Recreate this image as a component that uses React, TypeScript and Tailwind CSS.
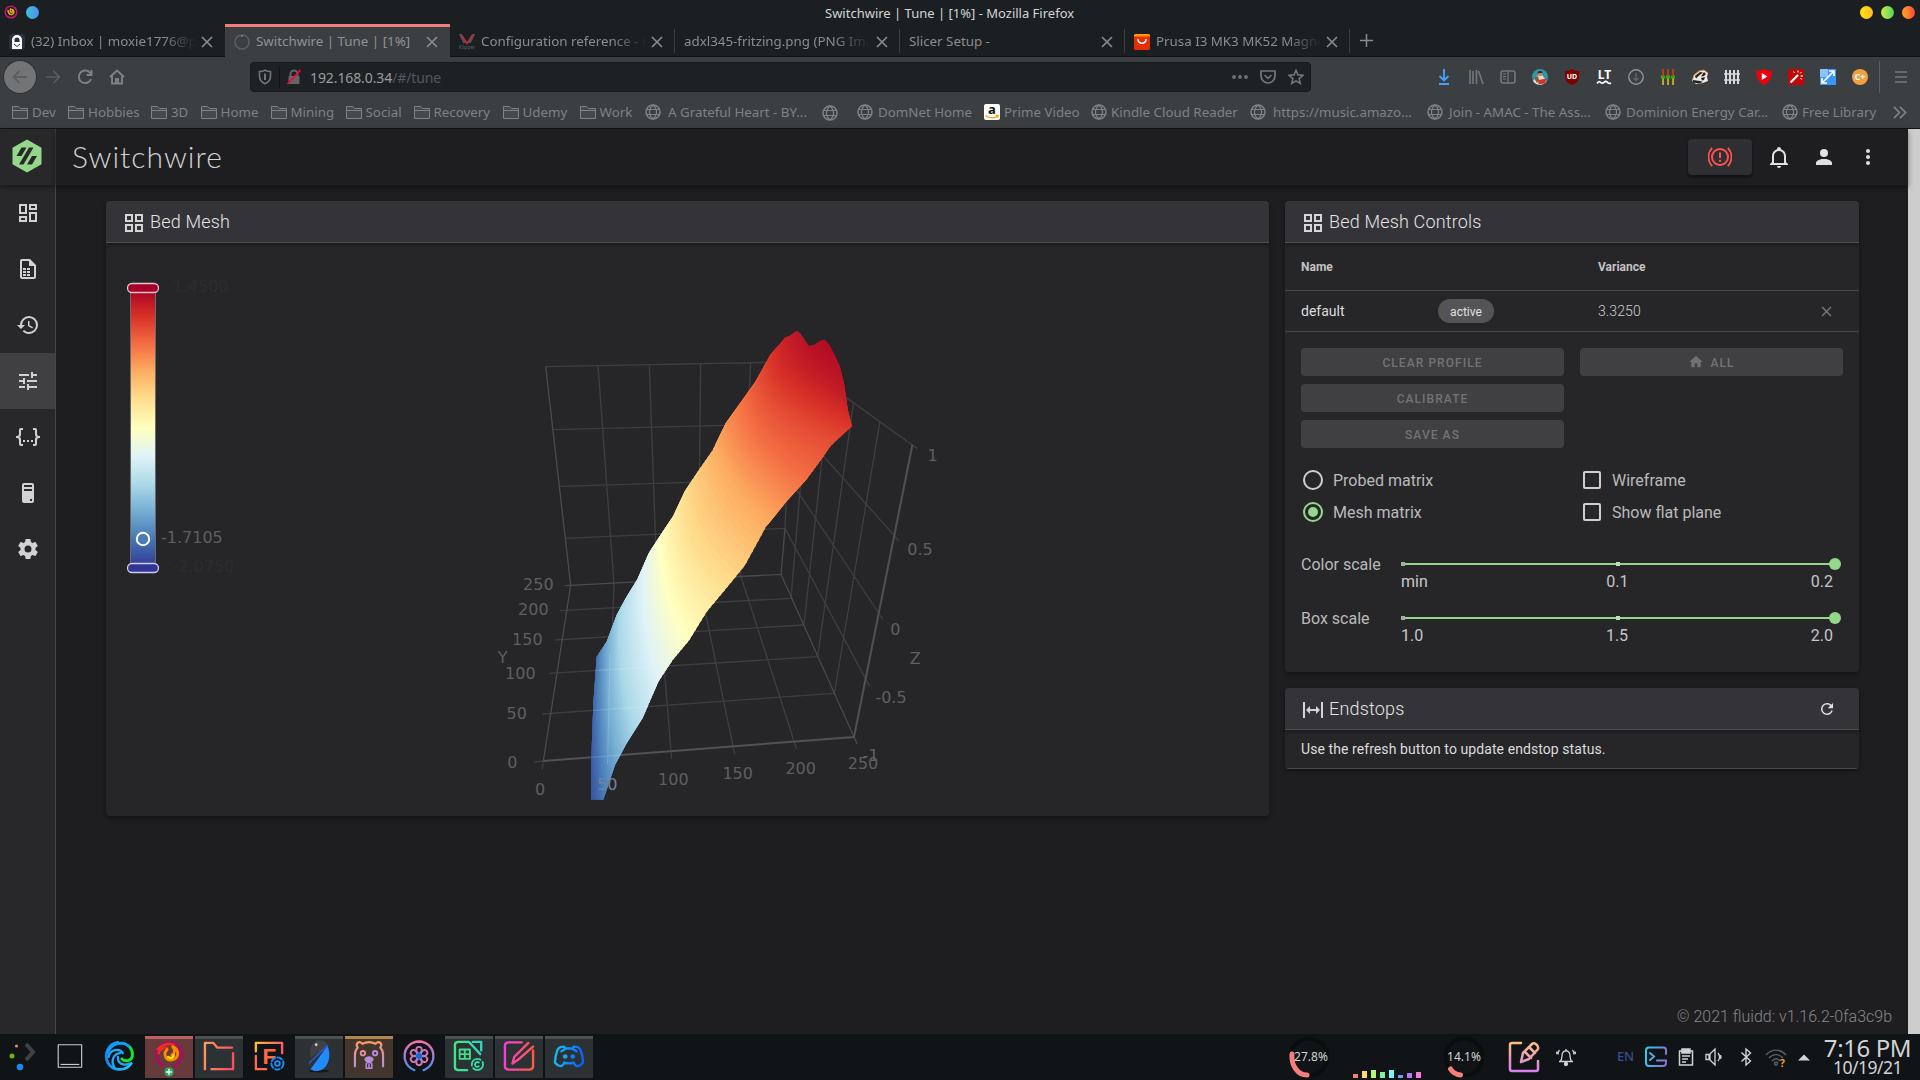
import React from "react";

const NOTO = "font-['Noto_Sans',sans-serif]";

/* ---------- Material glyphs ---------- */
const glyph = {
  dashboard:
    "M19,5V7H15V5H19M9,5V11H5V5H9M19,13V19H15V13H19M9,17V19H5V17H9M21,3H13V9H21V3M11,3H3V13H11V3M21,11H13V21H21V11M11,15H3V21H11V15Z",
  history:
    "M13.5,8H12V13L16.28,15.54L17,14.33L13.5,12.25V8M13,3A9,9 0 0,0 4,12H1L4.96,16.03L9,12H6A7,7 0 0,1 13,5A7,7 0 0,1 20,12A7,7 0 0,1 13,19C11.07,19 9.32,18.21 8.06,16.94L6.64,18.36C8.27,20 10.5,21 13,21A9,9 0 0,0 22,12A9,9 0 0,0 13,3",
  tune: "M3,17V19H9V17H3M3,5V7H13V5H3M13,21V19H21V17H13V15H11V21H13M7,9V11H3V13H7V15H9V9H7M21,13V11H11V13H21M15,9H17V7H21V5H17V3H15V9Z",
  json: "M5,3H7V5H5V10A2,2 0 0,1 3,12A2,2 0 0,1 5,14V19H7V21H5C3.93,20.73 3,20.1 3,19V15A2,2 0 0,0 1,13H0V11H1A2,2 0 0,0 3,9V5A2,2 0 0,1 5,3M19,3A2,2 0 0,1 21,5V9A2,2 0 0,0 23,11H24V13H23A2,2 0 0,0 21,15V19A2,2 0 0,1 19,21H17V19H19V14A2,2 0 0,1 21,12A2,2 0 0,1 19,10V5H17V3H19M7,15H9V17H7M11,15H13V17H11M15,15H17V17H15Z",
  tower:
    "M8,2H16A2,2 0 0,1 18,4V20A2,2 0 0,1 16,22H8A2,2 0 0,1 6,20V4A2,2 0 0,1 8,2M8,4V6H16V4H8M16,8H8V10H16V8M16,18H14V20H16V18Z",
  cog: "M12,15.5A3.5,3.5 0 0,1 8.5,12A3.5,3.5 0 0,1 12,8.5A3.5,3.5 0 0,1 15.5,12A3.5,3.5 0 0,1 12,15.5M19.43,12.97C19.47,12.65 19.5,12.33 19.5,12C19.5,11.67 19.47,11.34 19.43,11L21.54,9.37C21.73,9.22 21.78,8.95 21.66,8.73L19.66,5.27C19.54,5.05 19.27,4.96 19.05,5.05L16.56,6.05C16.04,5.66 15.5,5.32 14.87,5.07L14.5,2.42C14.46,2.18 14.25,2 14,2H10C9.75,2 9.54,2.18 9.5,2.42L9.13,5.07C8.5,5.32 7.96,5.66 7.44,6.05L4.95,5.05C4.73,4.96 4.46,5.05 4.34,5.27L2.34,8.73C2.21,8.95 2.27,9.22 2.46,9.37L4.57,11C4.53,11.34 4.5,11.67 4.5,12C4.5,12.33 4.53,12.65 4.57,12.97L2.46,14.63C2.27,14.78 2.21,15.05 2.34,15.27L4.34,18.73C4.46,18.95 4.73,19.03 4.95,18.95L7.44,17.94C7.96,18.34 8.5,18.68 9.13,18.93L9.5,21.58C9.54,21.82 9.75,22 10,22H14C14.25,22 14.46,21.82 14.5,21.58L14.87,18.93C15.5,18.67 16.04,18.34 16.56,17.94L19.05,18.95C19.27,19.03 19.54,18.95 19.66,18.73L21.66,15.27C21.78,15.05 21.73,14.78 21.54,14.63L19.43,12.97Z",
  grid: "M3 11H11V3H3M5 5H9V9H5M13 21H21V13H13M15 15H19V19H15M3 21H11V13H3M5 15H9V19H5M13 3V11H21V3M19 9H15V5H19Z",
  bell: "M10,21H14A2,2 0 0,1 12,23A2,2 0 0,1 10,21M21,19V20H3V19L5,17V11C5,7.9 7.03,5.17 10,4.29C10,4.19 10,4.1 10,4A2,2 0 0,1 12,2A2,2 0 0,1 14,4C14,4.1 14,4.19 14,4.29C16.97,5.17 19,7.9 19,11V17L21,19M17,11A5,5 0 0,0 12,6A5,5 0 0,0 7,11V18H17V11Z",
  account:
    "M12,4A4,4 0 0,1 16,8A4,4 0 0,1 12,12A4,4 0 0,1 8,8A4,4 0 0,1 12,4M12,14C16.42,14 20,15.79 20,18V20H4V18C4,15.79 7.58,14 12,14Z",
  dots: "M12,16A2,2 0 0,1 14,18A2,2 0 0,1 12,20A2,2 0 0,1 10,18A2,2 0 0,1 12,16M12,10A2,2 0 0,1 14,12A2,2 0 0,1 12,14A2,2 0 0,1 10,12A2,2 0 0,1 12,10M12,4A2,2 0 0,1 14,6A2,2 0 0,1 12,8A2,2 0 0,1 10,6A2,2 0 0,1 12,4Z",
  home: "M10,20V14H14V20H19V12H22L12,3L2,12H5V20H10Z",
  refresh:
    "M17.65,6.35C16.2,4.9 14.21,4 12,4A8,8 0 0,0 4,12A8,8 0 0,0 12,20C15.73,20 18.84,17.45 19.73,14H17.65C16.83,16.33 14.61,18 12,18A6,6 0 0,1 6,12A6,6 0 0,1 12,6C13.66,6 15.14,6.69 16.22,7.78L13,11H20V4L17.65,6.35Z",
  expand: "M9,11H15V8L19,12L15,16V13H9V16L5,12L9,8V11M2,20V4H4V20H2M20,20V4H22V20H20Z",
  file: "M6,2A2,2 0 0,0 4,4V20A2,2 0 0,0 6,22H18A2,2 0 0,0 20,20V8L14,2H6M6,4H13V9H18V20H6V4M7,11V13H10V11H7M11,11V13H14V11H11M7,14V16H10V14H7M11,14V16H14V14H11M7,17V19H10V17H7M11,17V19H14V17H11Z",
  close:
    "M19,6.41L17.59,5L12,10.59L6.41,5L5,6.41L10.59,12L5,17.59L6.41,19L12,13.41L17.59,19L19,17.59L13.41,12L19,6.41Z",
  radioOff:
    "M12,20A8,8 0 0,1 4,12A8,8 0 0,1 12,4A8,8 0 0,1 20,12A8,8 0 0,1 12,20M12,2A10,10 0 0,0 2,12A10,10 0 0,0 12,22A10,10 0 0,0 22,12A10,10 0 0,0 12,2Z",
  radioOn:
    "M12,20A8,8 0 0,1 4,12A8,8 0 0,1 12,4A8,8 0 0,1 20,12A8,8 0 0,1 12,20M12,2A10,10 0 0,0 2,12A10,10 0 0,0 12,22A10,10 0 0,0 22,12A10,10 0 0,0 12,2M12,7A5,5 0 0,0 7,12A5,5 0 0,0 12,17A5,5 0 0,0 17,12A5,5 0 0,0 12,7Z",
  checkOff:
    "M19,3H5C3.89,3 3,3.89 3,5V19A2,2 0 0,0 5,21H19A2,2 0 0,0 21,19V5C21,3.89 20.1,3 19,3M19,5V19H5V5H19Z",
};

function Mdi({ name, size = 24, className = "" }: { name: keyof typeof glyph; size?: number; className?: string }) {
  return (
    <svg width={size} height={size} viewBox="0 0 24 24" fill="currentColor" className={`shrink-0 ${className}`}>
      <path d={glyph[name]} />
    </svg>
  );
}

type Box = { size?: number; className?: string; children: React.ReactNode; vb?: string };
function Line({ size = 16, className = "", children, vb = "0 0 16 16" }: Box) {
  return (
    <svg width={size} height={size} viewBox={vb} fill="none" stroke="currentColor" strokeWidth="1.6" className={`shrink-0 ${className}`}>
      {children}
    </svg>
  );
}

/* ---------- Window title ---------- */
function TitleBar() {
  return (
    <div className="flex h-6 shrink-0 items-center bg-[#1b1f21] pl-1">
      <svg width="14" height="14" viewBox="0 0 14 14" fill="none">
        <circle cx="7" cy="7" r="5.8" stroke="#c2186a" strokeWidth="1.5" />
        <path d="M4 5c0 3 1.500 5 4 4.500s2.500-4.500 0-5c1.500 1.500 .5 3-.8 2.800S6 5 7 3.500" stroke="#f0a020" strokeWidth="1.500" />
      </svg>
      <span className="ml-2 size-[13px] rounded-full bg-linear-to-r from-[#3fc1dd] to-[#4c8ee9]" />
      <span className={`ml-[786px] mt-0.5 whitespace-nowrap text-[13px] leading-5 text-[#d3d5d6] ${NOTO}`}>
        Switchwire | Tune | [1%] - Mozilla Firefox
      </span>
      <div className="ml-auto flex gap-2 pr-[5px]">
        <span className="size-[13px] rounded-full bg-linear-to-r from-[#ffe600] to-[#ffb42b]" />
        <span className="size-[13px] rounded-full bg-linear-to-r from-[#c5ee3c] to-[#4fd35f]" />
        <span className="size-[13px] rounded-full bg-linear-to-r from-[#ffa72b] to-[#ff3f2f]" />
      </div>
    </div>
  );
}

/* ---------- Tabs ---------- */
const tabIcons: Record<string, React.ReactNode> = {
  proton: (
    <svg width="16" height="16" viewBox="0 0 16 16">
      <rect width="16" height="16" rx="3" fill="#2c2f3f" />
      <path d="M3 15V6a5 5 0 0 1 10 0v9z" fill="#fff" />
      <path d="M5.500 8V6a2.500 2.500 0 0 1 5 0v2z" fill="#2c2f3f" />
      <path d="M5 10l3 2.500 3-2.500" stroke="#2c2f3f" fill="none" />
    </svg>
  ),
  spin: (
    <svg width="16" height="16" viewBox="0 0 16 16" fill="none">
      <circle cx="8" cy="8" r="7" stroke="#5c6063" strokeWidth="1.500" />
      <path d="M8 1v2" stroke="#9a9c9e" />
    </svg>
  ),
  klipper: (
    <svg width="16" height="16" viewBox="0 0 16 16" fill="none">
      <path d="M1 0l4.500 9M15 0l-4.500 9" stroke="#4b5563" strokeWidth="2.200" />
      <path d="M2 .5l6 9 6-9" stroke="#b3303a" strokeWidth="1.800" />
      <text x="8" y="15" fontSize="5" textAnchor="middle" fill="#5a6472" fontFamily="Noto Sans">Klipper</text>
    </svg>
  ),
  ali: (
    <svg width="16" height="16" viewBox="0 0 16 16" fill="none">
      <rect width="16" height="16" rx="1.500" fill="#e62e04" />
      <path d="M0 2.500V1.500A1.500 1.500 0 0 1 1.500 0h13A1.500 1.500 0 0 1 16 1.500v1z" fill="#ff9a00" />
      <path d="M4 5.500c.5 5 7.500 5 8 0" stroke="#fff" strokeWidth="1.600" strokeLinecap="round" />
    </svg>
  ),
};

const tabs: { title: string; icon?: string; active?: boolean; fade?: boolean; sep?: boolean }[] = [
  { title: "(32) Inbox | moxie1776@pr", icon: "proton", fade: true },
  { title: "Switchwire | Tune | [1%]", icon: "spin", active: true },
  { title: "Configuration reference - K", icon: "klipper", fade: true, sep: true },
  { title: "adxl345-fritzing.png (PNG Ima", fade: true, sep: true },
  { title: "Slicer Setup -", sep: true },
  { title: "Prusa I3 MK3 MK52 Magne", icon: "ali", fade: true, sep: true },
];

function TabStrip() {
  return (
    <div className="flex h-[33px] shrink-0 bg-[#1b1f21]">
      {tabs.map((t) => (
        <div
          key={t.title}
          className={`relative flex w-[225px] shrink-0 items-center border-t-[3px] pl-[9px] pr-[11px] ${
            t.active ? "border-[#f27d7d] bg-[#3b3f42]" : "border-transparent shadow-[inset_0_-1px_0_#101315]"
          }`}
        >
          {t.icon && <span className="mr-1.5 shrink-0">{tabIcons[t.icon]}</span>}
          <span
            className={`flex-1 overflow-hidden whitespace-nowrap text-[13.33px] ${NOTO} ${
              t.active ? "text-[#8f9294]" : "text-[#8b8d8f]"
            } ${t.fade ? "mask-r-from-80% mask-r-to-100%" : ""}`}
          >
            {t.title}
          </span>
          <Line size={14} className="ml-1 text-[#8b8d8f]" vb="0 0 14 14">
            <path d="M2 2l10 10M12 2L2 12" />
          </Line>
          {t.sep && <span className="absolute right-0 top-0.5 h-6 w-px bg-[#3a3e41]" />}
        </div>
      ))}
      <div className="flex flex-1 items-center pl-[9px] text-[#8b8d8f] shadow-[inset_0_-1px_0_#101315]">
        <Line size={15}><path d="M8 1v14M1 8h14" /></Line>
      </div>
    </div>
  );
}

/* ---------- Navigation ---------- */
function Extensions() {
  return (
    <div className="flex items-center gap-4">
      <Line className="text-[#45a1ff]"><path d="M8 0v11M3.500 7L8 11.500 12.500 7M3 15h10" strokeWidth="1.800" /></Line>
      <Line className="text-[#76797b]"><path d="M2 1v14M5 2v13M8.500 1v14M10.500 2l4.500 13" /></Line>
      <Line className="text-[#76797b]"><rect x="1" y="2" width="14" height="12" rx="2" /><path d="M8 2v12M3 5h3M3 7.500h3M3 10h3" strokeWidth="1.200" /></Line>
      <svg width="16" height="16" viewBox="0 0 16 16">
        <circle cx="8" cy="8" r="8" fill="#2f98a8" />
        <path d="M1 12L5.500 6.500h5L14.500 12a8 8 0 0 1-13.500 0z" fill="#e9dcc8" />
        <circle cx="8" cy="5" r="2.300" fill="#c98c62" />
        <path d="M5.500 4.500C5 1 11 1 10.500 4z" fill="#46291c" />
        <path d="M2 9l4-2 1 4-2 3z" fill="#8a5a3c" />
        <path d="M6 11l9-1.500-2.500 5-6 .8z" fill="#d5332c" />
      </svg>
      <svg width="16" height="16" viewBox="0 0 16 16">
        <path d="M8 0c2 1.500 4.500 2 7 2v5c0 5-3 7.500-7 9-4-1.500-7-4-7-9V2c2.500 0 5-.5 7-2z" fill="#800000" />
        <text x="8" y="10" textAnchor="middle" fontSize="7" fontWeight="700" fill="#fff" fontFamily="Noto Sans">UD</text>
      </svg>
      <svg width="16" height="16" viewBox="0 0 16 16" fill="none">
        <text x="8.500" y="10" textAnchor="middle" fontSize="12" fontWeight="700" fill="#fff" fontFamily="Noto Sans">LT</text>
        <path d="M1 14.500q1.750-3 3.500-1.200t3.500 0 3.500 0 3.500 .7" stroke="#fff" strokeWidth="1.700" />
      </svg>
      <Line className="text-[#8e9092]"><circle cx="8" cy="8" r="7.200" strokeWidth="1.500" /><path d="M8 4v7M5.500 9L8 11.500 10.500 9" stroke="#5f6264" /></Line>
      <svg width="16" height="16" viewBox="0 0 16 16">
        {[3, 8, 13].map((x) => (
          <g key={x}>
            <rect x={x - 0.7} y="0" width="1.500" height="7" fill="#e3341c" />
            <rect x={x - 0.7} y="9" width="1.500" height="7" fill="#e8c91c" />
            <rect x={x - 2.2} y="6.500" width="4.200" height="3" fill="#39a808" />
          </g>
        ))}
      </svg>
      <svg width="16" height="16" viewBox="0 0 16 16">
        <path d="M0 12L2 6l5-4 5-1 4 3-1 4 1 4-5 2-7 1z" fill="#efe9e2" />
        <path d="M3 7l5-4 3 .5-4 3-3 3zM12 3l2 2-2 2-3 .5zM9 9l4-1-1 3-2 .5zM1 11l7 1 3 1-4 1.500-6-1z" fill="#222" />
        <path d="M0 12L2 6l5-4 5-1 4 3" stroke="#c98545" fill="none" />
      </svg>
      <svg width="16" height="16" viewBox="0 0 16 16" stroke="#d9dadb" fill="none">
        <path d="M2 1v14M6 1v14M10 1v14M14 1v14" strokeWidth="2" />
        <path d="M0 5h16M0 11h16" strokeWidth="1.300" />
      </svg>
      <svg width="16" height="16" viewBox="0 0 16 16">
        <path d="M8 0c2 1.200 5 1.500 8 2 0 6-2 11-8 14C2 13 0 8 0 2c3-.5 6-.8 8-2z" fill="#f00009" />
        <path d="M5.800 4v7l5.500-3.500z" fill="#fff" />
      </svg>
      <svg width="16" height="16" viewBox="0 0 16 16" fill="none">
        <rect width="16" height="16" fill="#c00808" />
        <path d="M2.500 13.500L10 6" stroke="#fff" strokeWidth="2.200" />
        <path d="M10 1.500v2M13.500 3L12 4.500M15 7h-2.500M5.500 2.500l1 1.500M12.500 9l1 1.500" stroke="#fff" />
      </svg>
      <svg width="16" height="16" viewBox="0 0 16 16" fill="none">
        <rect width="16" height="16" fill="#3b97fb" />
        <path d="M0 0h8v8H0z" fill="#8cc2ff" />
        <path d="M3 13L13 3M9 2h5v5M2 9v5h5" stroke="#fff" strokeWidth="1.700" />
      </svg>
      <svg width="16" height="16" viewBox="0 0 16 16">
        <circle cx="8" cy="8" r="8" fill="#f0a040" />
        <text x="8" y="11.300" textAnchor="middle" fontSize="9" fontWeight="700" fill="#fff" fontFamily="Noto Sans">C+</text>
      </svg>
    </div>
  );
}

function NavBar() {
  return (
    <div className="flex h-10 shrink-0 items-center bg-[#3b3f42] pl-1 pr-3">
      <span className="flex size-8 items-center justify-center rounded-full bg-[#727476] shadow-[0_0_0_1px_#2e3133]">
        <Line className="text-[#5b5e60]"><path d="M15 8H1.500M7.500 2L1.500 8l6 6" strokeWidth="1.800" /></Line>
      </span>
      <Line className="ml-[9px] text-[#5b5e60]"><path d="M1 8h13.500M8.500 2l6 6-6 6" /></Line>
      <Line className="ml-4 text-[#808385]"><path d="M13.500 4.500A6.300 6.300 0 1 0 14 10M14.500 1v5h-5" strokeWidth="1.900" /></Line>
      <Line className="ml-4 text-[#808385]"><path d="M1 8l7-6.500L15 8M3 7v7.500h10V7M7 14v-4h2v4" strokeWidth="1.900" /></Line>
      <div className="ml-[125px] flex h-[30px] w-[1061px] items-center rounded-[4px] border border-[#171a1c] bg-[#1d2123] pl-[6px] pr-[6px]">
        <Line className="text-[#737577]"><path d="M8 1.200c1.800 1 3.500 1.300 5.500 1.300v4.500c0 4-2 6.300-5.500 7.800C4.500 13.300 2.500 11 2.500 7V2.500c2 0 3.700-.3 5.500-1.300z" /><path d="M8 4.500v6.500" strokeWidth="2" /></Line>
        <span className="ml-1.5 h-[22px] w-px bg-[#121416]" />
        <svg width="16" height="16" viewBox="0 0 16 16" fill="none" className="ml-1.5">
          <path d="M4.500 8V5a3.500 3.500 0 0 1 7 0v3" stroke="#636567" strokeWidth="2" />
          <rect x="2.500" y="7" width="11" height="8" rx="1" fill="#636567" />
          <path d="M1.500 15L14.500 1" stroke="#ff0039" strokeWidth="1.800" />
        </svg>
        <span className={`ml-2 text-[14px] tracking-[-0.1px] text-[#9b9d9e] ${NOTO}`}>
          192.168.0.34<span className="text-[#54585a]">/#/tune</span>
        </span>
        <svg width="18" height="16" viewBox="0 0 18 16" fill="#6b6e70" className="ml-auto">
          <circle cx="3" cy="8" r="2" /><circle cx="9" cy="8" r="2" /><circle cx="15" cy="8" r="2" />
        </svg>
        <Line className="ml-[11px] text-[#737577]"><path d="M1 2h14v5a7 7 0 0 1-14 0zM4.500 6L8 9.300 11.500 6" strokeWidth="1.700" /></Line>
        <Line className="ml-3 text-[#737577]"><path d="M8 1.300l2 4.600 4.900.4-3.700 3.300 1.100 4.900L8 11.900l-4.300 2.600 1.100-4.900L1.100 6.300 6 5.900z" /></Line>
      </div>
      <div className="ml-auto flex items-center">
        <Extensions />
        <span className="ml-[11px] h-8 w-px bg-[#5a5d5f]" />
        <Line size={14} className="ml-3.5 text-[#76797b]" vb="0 0 14 14"><path d="M1 2h12M1 7h12M1 12h12" /></Line>
      </div>
    </div>
  );
}

/* ---------- Bookmarks ---------- */
const Folder = () => (
  <svg width="16" height="16" viewBox="0 0 16 16" fill="none" className="shrink-0">
    <path d="M.5 14.500V2.500h6l2 2h7v10zM.5 6.500h15" stroke="#808385" fill="#474a4c" />
  </svg>
);
const Globe = () => (
  <Line className="text-[#808385]">
    <circle cx="8" cy="8" r="7" strokeWidth="1.500" />
    <path d="M8 1c-4.700 4-4.700 10 0 14M8 1c4.700 4 4.700 10 0 14M1.500 5.500h13M1.500 10.500h13" strokeWidth="1.200" />
  </Line>
);
const Amazon = () => (
  <svg width="16" height="16" viewBox="0 0 16 16" fill="none" className="shrink-0">
    <rect width="16" height="16" rx="2" fill="#fff" />
    <text x="8" y="10" textAnchor="middle" fontSize="13" fontWeight="700" fill="#111" fontFamily="Noto Sans">a</text>
    <path d="M1.500 11.500c4 3.200 9 3 12 .5M12 11.500h2v2" stroke="#f90" strokeWidth="1.300" />
  </svg>
);
const bookmarks: [string, "f" | "g" | "a", string, string][] = [
  ["Dev", "f", "w-[56px]", "gap-1"],
  ["Hobbies", "f", "w-[83px]", "gap-1"],
  ["3D", "f", "w-[49.5px]", "gap-1"],
  ["Home", "f", "w-[70px]", "gap-1"],
  ["Mining", "f", "w-[75px]", "gap-1"],
  ["Social", "f", "w-[68px]", "gap-1"],
  ["Recovery", "f", "w-[89px]", "gap-1"],
  ["Udemy", "f", "w-[77px]", "gap-1"],
  ["Work", "f", "w-[65.5px]", "gap-1"],
  ["A Grateful Heart - BY...", "g", "w-[177px]", "gap-[7px]"],
  ["", "g", "w-[35px]", "gap-1"],
  ["DomNet Home", "g", "w-[127px]", "gap-[5px]"],
  ["Prime Video", "a", "w-[107px]", "gap-1"],
  ["Kindle Cloud Reader", "g", "w-[159px]", "gap-1"],
  ["https://music.amazo...", "g", "w-[177px]", "gap-[7px]"],
  ["Join - AMAC - The Ass...", "g", "w-[178px]", "gap-[6px]"],
  ["Dominion Energy Car...", "g", "w-[177px]", "gap-[5px]"],
  ["Free Library", "g", "w-[105px]", "gap-1"],
];
function Bookmarks() {
  return (
    <div className={`flex h-8 shrink-0 items-center border-b border-[#101315] bg-[#3b3f42] pl-3 text-[13.33px] text-[#7f8284] ${NOTO}`}>
      {bookmarks.map(([t, k, w, g], i) => (
        <div key={i} className={`flex shrink-0 items-center whitespace-nowrap ${w} ${g}`}>
          {k === "f" ? <Folder /> : k === "g" ? <Globe /> : <Amazon />}
          <span>{t}</span>
        </div>
      ))}
      <Line size={15} className="ml-[5px] text-[#808385]"><path d="M2 2l6 6-6 6M8.500 2l6 6-6 6" strokeWidth="1.800" /></Line>
    </div>
  );
}

/* ---------- Side navigation ---------- */
const sideItems: (keyof typeof glyph)[] = ["dashboard", "file", "history", "tune", "json", "tower", "cog"];
function SideNav() {
  return (
    <nav className="flex w-14 shrink-0 flex-col border-r border-[#474749] bg-[#28282b]">
      <div className="flex h-14 items-center justify-center pr-px shadow-[0_2px_5px_rgba(0,0,0,0.4)]">
        <svg width="30" height="34" viewBox="0 0 30 34" className="-mt-0.5">
          <path d="M15 .5L29.500 8.700v16.600L15 33.500.5 25.300V8.700z" fill="#94d68a" />
          <path d="M9.500 8.500h5L9.500 17h-5zM17 8.500h4.500L11.500 25.500H7zM20 17h5l-5 8.500h-5z" fill="#28282b" />
        </svg>
      </div>
      {sideItems.map((n) => (
        <div key={n} className={`flex h-14 items-center justify-center ${n === "tune" ? "bg-[#404042]" : ""}`}>
          <Mdi name={n} className="text-[#d2d2d3]" />
        </div>
      ))}
    </nav>
  );
}

function AppBar() {
  return (
    <header className="z-10 flex h-14 shrink-0 items-center bg-[#1e1e20] pl-4 pr-7 shadow-[0_2px_5px_rgba(0,0,0,0.45)]">
      <h1 className="-mt-0.5 font-[Lato] text-[30px] font-light tracking-[1px] text-[#d2d2d3]">Switchwire</h1>
      <div className="ml-auto flex items-center">
        <span className="flex h-9 w-16 items-center justify-center rounded bg-[#2f2f33] shadow-[0_2px_3px_rgba(0,0,0,0.5)]">
          <svg width="24" height="24" viewBox="0 0 24 24" fill="none" stroke="#ff5252" strokeWidth="2">
            <circle cx="12" cy="12" r="8" />
            <path d="M12 7.500v5.500M12 14.800v2" />
            <path d="M4.200 3C-.7 8 -.7 16 4.200 21M19.800 3c4.900 5 4.900 13 0 18" strokeWidth="1.800" />
          </svg>
        </span>
        <Mdi name="bell" className="ml-[15px] text-[#e1e1e1]" />
        <Mdi name="account" className="ml-[21px] text-[#e1e1e1]" />
        <Mdi name="dots" className="ml-5 text-[#e1e1e1]" />
      </div>
    </header>
  );
}

/* ---------- Bed mesh plot ---------- */
const ramp = [
  [49, 54, 149], [69, 117, 180], [116, 173, 209], [171, 217, 233], [224, 243, 248], [255, 255, 191],
  [254, 224, 144], [253, 174, 97], [244, 109, 67], [215, 48, 39], [165, 0, 38],
];
function rampColor(v: number) {
  const t = Math.min(0.9999, Math.max(0, v)) * 10;
  const i = Math.floor(t);
  const f = t - i;
  return `rgb(${ramp[i].map((c, k) => Math.round(c + (ramp[i + 1][k] - c) * f)).join(",")})`;
}

/* value, then left / middle / right points of each level line */
const levels: [number, number, number, number, number, number, number][] = [
  [0.03, 325, 1000, 325, 1250, 325, 1480],
  [0.1, 356, 1010, 352, 1250, 372, 1475],
  [0.2, 386, 975, 388, 1180, 415, 1350],
  [0.3, 425, 890, 430, 1080, 470, 1265],
  [0.4, 497, 745, 497, 920, 537, 1115],
  [0.5, 543, 672, 568, 840, 630, 990],
  [0.6, 612, 545, 645, 710, 745, 832],
  [0.7, 708, 400, 765, 530, 868, 645],
  [0.75, 745, 325, 795, 440, 925, 575],
  [0.8, 800, 250, 840, 370, 985, 505],
  [0.86, 850, 175, 905, 280, 1085, 385],
  [0.9, 885, 115, 935, 220, 1115, 325],
  [0.935, 925, 70, 965, 160, 1105, 270],
  [0.96, 965, 50, 1010, 130, 1095, 190],
  [0.98, 1000, 30, 1040, 60, 1080, 90],
];

function strips() {
  const out: { d: string; c: string }[] = [];
  const ext = (p: number[]) => {
    const [lx, ly, mx, my, rx, ry] = p;
    const ax = lx + (lx - mx) * 0.5;
    const ay = ly + (ly - my) * 0.5;
    const bx = rx + (rx - mx) * 0.5;
    const by = ry + (ry - my) * 0.5;
    const cx = 2 * mx - (lx + rx) / 2;
    const cy = 2 * my - (ly + ry) / 2;
    const pts: string[] = [`${ax},${ay}`];
    for (let k = 0; k <= 8; k++) {
      const t = k / 8;
      const x = (1 - t) ** 2 * lx + 2 * t * (1 - t) * cx + t * t * rx;
      const y = (1 - t) ** 2 * ly + 2 * t * (1 - t) * cy + t * t * ry;
      pts.push(`${x.toFixed(1)},${y.toFixed(1)}`);
    }
    pts.push(`${bx},${by}`);
    return pts;
  };
  for (let i = 0; i < levels.length - 1; i++) {
    const n = 12;
    for (let k = 0; k < n; k++) {
      const at = (f: number) => levels[i].map((a, j) => a + (levels[i + 1][j] - a) * f);
      const a = at(k / n);
      const b = at((k + 1) / n);
      const pa = ext(a.slice(1));
      const pb = ext(b.slice(1)).reverse();
      out.push({ d: `M${pa.join("L")}L${pb.join("L")}Z`, c: rampColor((a[0] + b[0]) / 2) });
    }
  }
  return out;
}

const outline =
  "333,1469 334,1340 340,1180 350,1040 380,995 410,915 437,865 472,808 507,728 545,670 580,617 615,542 655,482 697,422 738,338 780,280 825,217 872,133 917,82 930,78 945,66 953,64 962,72 975,92 987,108 1003,105 1020,93 1035,90 1048,105 1065,138 1079,168 1092,220 1098,260 1103,298 1116,349 1080,381 1050,410 1030,440 980,508 920,574 857,652 795,766 755,815 680,905 628,990 578,1050 535,1115 488,1224 440,1300 405,1365 370,1469";

const wall =
  "M197,170L925,156M220,359L930,341M239,529L925,508M257,685L915,655M354,167L402,822M508,165L531,813M662,160L655,806M812,158L782,797M935,155L915,655" +
  "M928,140L1312,416M930,325L1256,692M925,503L1208,927M915,655L1169,1129M1200,333L1063,1150M1121,275L1013,1040M1050,225L972,945M990,190L933,865" +
  "M240,902L933,865M226,990L972,945M208,1090L1013,1040M186,1212L1063,1150M402,822L383,1362M531,813L575,1347M655,806L764,1332M782,797L950,1318M162,1356L190,1353L187,1378";
const edges = "M197,170L272,826M915,655L903,793M255,827L903,793L1122,1281L1132,1302M272,826L190,1353";

const plotLabels: [string, number, number][] = [
  ["250", 175, 824], ["200", 160, 899], ["150", 142, 987], ["100", 121, 1089], ["50", 110, 1210], ["0", 97, 1356], ["Y", 68, 1042],
  ["0", 180, 1438], ["50", 382, 1422], ["100", 580, 1407], ["150", 773, 1391], ["200", 962, 1376], ["250", 1149, 1360], ["-1", 1172, 1337],
  ["1", 1358, 436], ["0.5", 1320, 718], ["0", 1246, 957], ["-0.5", 1233, 1161], ["Z", 1306, 1045],
];

function MeshPlot() {
  return (
    <svg width="1163" height="572" viewBox="106 243 1163 572" fontFamily="DejaVu Sans, sans-serif" fontSize="16">
      <defs>
        <linearGradient id="scale" x1="0" y1="288" x2="0" y2="568" gradientUnits="userSpaceOnUse">
          {ramp.map((_, i) => (
            <stop key={i} offset={i / 10} stopColor={rampColor(1 - i / 10)} />
          ))}
        </linearGradient>
        <clipPath id="sheet"><polygon points={outline} /></clipPath>
      </defs>
      <rect x="130.500" y="288" width="25" height="280" fill="url(#scale)" stroke="#6a6a6c" />
      <rect x="127.500" y="283.500" width="31" height="9" rx="4.500" fill="#a50026" stroke="#e6c4cc" strokeWidth="1.300" />
      <rect x="127.500" y="563.500" width="31" height="9" rx="4.500" fill="#313695" stroke="#ccd0ec" strokeWidth="1.300" />
      <circle cx="143" cy="539" r="6.200" fill="#4a7db8" stroke="#fff" strokeWidth="2" />
      <text x="161" y="543" fill="#5f5f61">-1.7105</text>
      <text x="172.500" y="292" fill="#2c2c2e">1.4500</text>
      <text x="172.500" y="572" fill="#2c2c2e">-2.0750</text>

      <g transform="translate(480 310) scale(0.33333)" fill="none">
        <path d={wall} stroke="#3e3e40" strokeWidth="4" />
        <path d={edges} stroke="#4a4a4c" strokeWidth="4" />
        <path d="M1297,405L1122,1281L190,1353" stroke="#515153" strokeWidth="6" />
        <g clipPath="url(#sheet)">
          {strips().map((s, i) => (
            <path key={i} d={s.d} fill={s.c} stroke={s.c} strokeWidth="7" strokeLinejoin="round" />
          ))}
          <path d="M208,1090L500,1072M186,1212L500,1190M390,1030L383,1362M190,1353L450,1333" stroke="#fff" strokeOpacity="0.14" strokeWidth="4" />
        </g>
      </g>
      {plotLabels.map(([t, x, y], i) => (
        <text key={i} x={480 + x / 3} y={310 + y / 3 + 5.7} textAnchor="middle" fill={t === "50" && y > 1300 ? "#7382a0" : "#5f5f61"}>
          {t}
        </text>
      ))}
    </svg>
  );
}

/* ---------- Cards ---------- */
function Card({ icon, title, action, className = "", children }: { icon: keyof typeof glyph; title: string; action?: React.ReactNode; className?: string; children: React.ReactNode }) {
  return (
    <section className={`flex flex-col overflow-hidden rounded bg-[#262628] ${className}`}>
      <div className="z-10 flex h-[42px] shrink-0 items-center border-b border-[#505053] bg-[#343338] pl-4 pr-[23px] shadow-[0_2px_4px_rgba(0,0,0,0.35)]">
        <Mdi name={icon} className="mt-0.5 text-[#d5d5d6]" />
        <span className="ml-1 text-[18px] font-light tracking-[0.17px] text-[#e4e4e5]">{title}</span>
        {action && <span className="ml-auto">{action}</span>}
      </div>
      {children}
    </section>
  );
}

function Btn({ children }: { children: React.ReactNode }) {
  return (
    <button className="flex h-7 w-full items-center justify-center gap-1.5 rounded bg-[#404042] pt-px text-[12px] font-medium tracking-[1.07px] text-[#737375]">
      {children}
    </button>
  );
}

function Choice({ icon, label, on }: { icon: keyof typeof glyph; label: string; on?: boolean }) {
  return (
    <div className="flex h-8 items-center gap-2">
      <Mdi name={icon} className={on ? "text-[#94d68a]" : "text-[#cfcfd0]"} />
      <span className="pt-0.5 text-[16px] text-[#bababb]">{label}</span>
    </div>
  );
}

function Slider({ label, ticks }: { label: string; ticks: string[] }) {
  return (
    <div className="flex h-[54px] text-[16px] text-[#bababb]">
      <span className="w-[100px] pt-px leading-6">{label}</span>
      <div className="w-[434px]">
        <div className="relative mt-[11px] flex h-0.5 items-center justify-between bg-[#94d68a]">
          <span className="size-1 bg-[#a9a9aa]" />
          <span className="size-1 bg-[#bfe0ba]" />
          <span className="size-1" />
          <span className="absolute -right-1.5 size-3 rounded-full bg-[#94d68a]" />
        </div>
        <div className="mt-[5px] flex justify-between pr-[2px] text-[#c6c6c7]">
          {ticks.map((t) => (
            <span key={t} className={`leading-6 ${t === "0.1" ? "-ml-1" : ""}`}>{t}</span>
          ))}
        </div>
      </div>
    </div>
  );
}

function Controls() {
  return (
    <Card icon="grid" title="Bed Mesh Controls" className="h-[471px] shadow-[0_2px_4px_rgba(0,0,0,0.4)]">
      <div className="grid h-12 shrink-0 grid-cols-[297px_1fr] items-center border-b border-[#474749] pl-4 text-[12px] font-bold text-[#c3c3c4]">
        <span>Name</span>
        <span>Variance</span>
      </div>
      <div className="flex h-[41px] shrink-0 items-center border-b border-[#474749] pl-4 pr-6 text-[14px]">
        <span className="w-[137px] text-[#dcdcdd]">default</span>
        <span className="flex h-6 w-14 items-center justify-center rounded-full bg-[#545456] pt-px text-[12px] text-[#e0e0e1]">active</span>
        <span className="ml-[104px] font-light tracking-[0.1px] text-[#d0d0d1]">3.3250</span>
        <Mdi name="close" size={17} className="ml-auto text-[#78787a]" />
      </div>
      <div className="grid grid-cols-2 gap-4 px-4 pt-4">
        <div className="flex flex-col gap-2">
          <Btn>CLEAR PROFILE</Btn>
          <Btn>CALIBRATE</Btn>
          <Btn>SAVE AS</Btn>
        </div>
        <div>
          <Btn><Mdi name="home" size={16} className="-mt-px" />ALL</Btn>
        </div>
      </div>
      <div className="mt-4 grid grid-cols-2 gap-x-4 px-4">
        <Choice icon="radioOff" label="Probed matrix" />
        <Choice icon="checkOff" label="Wireframe" />
        <Choice icon="radioOn" label="Mesh matrix" on />
        <Choice icon="checkOff" label="Show flat plane" />
      </div>
      <div className="mt-6 pl-4">
        <Slider label="Color scale" ticks={["min", "0.1", "0.2"]} />
        <Slider label="Box scale" ticks={["1.0", "1.5", "2.0"]} />
      </div>
    </Card>
  );
}

/* ---------- Desktop panel ---------- */
function Gradients() {
  const g: [string, string[], boolean?][] = [
    ["gEdge", ["#0a7cff", "#27c4ff"]],
    ["gWarm", ["#ff9a62", "#ff4f5e"]],
    ["gFus", ["#ffc233", "#ff5470"]],
    ["gBear", ["#ff9a62", "#a88df0"], true],
    ["gAtom", ["#f76fae", "#4b8df0"], true],
    ["gCalc", ["#3fe87e", "#2fd6c0"]],
    ["gPen", ["#f838e8", "#ff5a4a"]],
    ["gDis", ["#19c6ee", "#0a63ff"]],
    ["gNote", ["#ffc27a", "#d57cf0"], true],
    ["gTerm", ["#22d8f0", "#b04cd0"]],
  ];
  return (
    <svg width="0" height="0" className="absolute">
      <defs>
        {g.map(([id, c, v]) => (
          <linearGradient key={id} id={id} gradientUnits="userSpaceOnUse" x1="0" y1="0" x2={v ? 0 : 32} y2={v ? 32 : 6}>
            <stop offset="0" stopColor={c[0]} />
            <stop offset="1" stopColor={c[1]} />
          </linearGradient>
        ))}
      </defs>
    </svg>
  );
}

function Task({ tone = "none", children }: { tone?: "none" | "gray" | "red" | "gold"; children: React.ReactNode }) {
  const c = {
    none: "border-transparent",
    gray: "border-[#4b5053] bg-[#2c3133]",
    red: "border-[#ba6262] bg-[#673a3c]",
    gold: "border-[#b08550] bg-[#41352c]",
  }[tone];
  return (
    <div className={`flex h-[42px] w-12 shrink-0 items-center justify-center border-t-[3px] pb-[5px] ${c}`}>
      <svg width="30" height="30" viewBox="0 0 32 32" fill="none" strokeWidth="2.500" strokeLinecap="round" strokeLinejoin="round" overflow="visible">
        {children}
      </svg>
    </div>
  );
}

function Tasks() {
  return (
    <div className="flex items-center gap-0.5 pl-[45px]">
      <Task>
        <g strokeLinecap="butt"><rect x="4.500" y="4" width="25" height="24" stroke="#c9ccce" strokeWidth="1.200" /><path d="M7 25h20" stroke="#c9ccce" strokeWidth="1.200" /></g>
      </Task>
      <Task>
        <path d="M29 24C23 33 9 32 4 23 0 14 4 3 15 1.500" stroke="url(#gEdge)" strokeWidth="3" />
        <path d="M4 12C8 2 21-1 28 7" stroke="#149cf5" strokeWidth="3" />
        <path d="M28 7c4 6 3 13-3 14-3 .3-5-.5-6-2" stroke="#0be83a" strokeWidth="3" />
        <path d="M5 17c1-8 12-10 15-4M11 28c-4-7-1-14 6-15M15 17c-1 7 6 10 12 7" stroke="#1fa8fa" strokeWidth="2.500" />
      </Task>
      <Task tone="red">
        <path d="M9 26C-1 19 1 3 16 1.500 31 2 34 19 22 27" stroke="#c0006e" strokeWidth="2.500" />
        <path d="M4 9c6-6 11-7 17-5M5 13c1-4 4-6 9-6" stroke="#f0301e" strokeWidth="2.500" />
        <path d="M14 9c-5 5-1 13 6 11s7-11 0-14c3 4 2 8-1 9" stroke="#ff8a00" strokeWidth="3" />
        <path d="M15 17c2 2 6 1 6-2" stroke="#ffe100" strokeWidth="2.500" />
        <circle cx="16" cy="33" r="5" fill="#2aa866" />
        <path d="M16 30.500v5M13.500 33h5" stroke="#fff" strokeWidth="1.600" />
      </Task>
      <Task tone="gray">
        <path d="M1 30V2h9l4 5h16M31 13v17H8" stroke="url(#gWarm)" />
      </Task>
      <Task>
        <path d="M2 11V2h28v11" stroke="url(#gFus)" />
        <path d="M2 16v14h11" stroke="#ff6a50" />
        <text x="9" y="25" fontSize="24" fontWeight="700" fill="#ff6a3c" stroke="none" fontFamily="Liberation Sans">F</text>
        <circle cx="25" cy="24" r="6.500" stroke="#1590ff" strokeWidth="2" strokeDasharray="5 2.500" />
        <circle cx="25" cy="24" r="2.500" stroke="#1590ff" strokeWidth="2" />
      </Task>
      <Task tone="gray">
        <ellipse cx="16" cy="32" rx="11" ry="1.500" fill="#15181a" />
        <path d="M7 18C4 7 10-1 17-1c5 0 8 3 8 7z" fill="#3e4143" />
        <path d="M25 5c4 9 2 20-5 25-5 3-10 2-13 0z" fill="#1e8cff" />
        <path d="M25 5L6 23" stroke="#2f52c8" strokeWidth="2" />
        <circle cx="13" cy="4" r="1.500" fill="#c9cbcc" />
      </Task>
      <Task tone="gold">
        <path d="M1 27V15c0-4 1-6 3-8C1 3 5-1 9 3c4-2 10-2 14 0 4-4 8 0 5 4 2 2 3 4 3 8v12" stroke="url(#gBear)" strokeWidth="2.300" />
        <circle cx="9.500" cy="13" r="2.300" stroke="#e58f98" strokeWidth="2" />
        <circle cx="22.500" cy="13" r="2.300" stroke="#b98be0" strokeWidth="2" />
        <path d="M11 20c0-5 10-5 10 0l-3 4h-4z" fill="#b78ce0" />
        <path d="M13 24v5h6v-5M16 25v4" stroke="#b78ce0" strokeWidth="1.600" />
      </Task>
      <Task>
        <path d="M11 31C-5 25-2 1 16 .5 34 1 37 25 21 31" stroke="url(#gAtom)" />
        {[0, 60, 120, 180, 240, 300].map((a) => (
          <ellipse key={a} cx="16" cy="9.800" rx="3" ry="3.600" stroke="url(#gAtom)" strokeWidth="2" transform={`rotate(${a} 16 16)`} />
        ))}
        <circle cx="16" cy="16" r="3.200" fill="#0a6ce0" />
      </Task>
      <Task tone="gray">
        <path d="M14 31H5c-2 0-4-1-4-3V4c0-2 2-3 4-3h11l12 13" stroke="url(#gCalc)" />
        <path d="M20 1h9v9" stroke="#2fd9b0" />
        <path d="M6 9h11v10H6zM11.500 9v10M6 14h11" stroke="#3fe08c" strokeWidth="2" />
        <circle cx="25" cy="25" r="6" stroke="#35dba0" strokeWidth="2" strokeDasharray="14 3" />
        <path d="M26.500 23a2.500 2.500 0 1 0 0 4" stroke="#35dba0" strokeWidth="2" />
      </Task>
      <Task tone="gray">
        <path d="M19 1.500H5C2 1.500 1 2.500 1 5v22c0 2.500 1 3.500 4 3.500h22c3 0 4-1 4-3.500V10" stroke="url(#gPen)" />
        <path d="M26 2L11 17l-2 7 6-4L31 6" stroke="url(#gPen)" />
      </Task>
      <Task tone="gray">
        <path d="M11 6C7 6 5 7 4 9 2 14 1 19 1 23c3 4 7 5 9 2l1-2c3 1 7 1 10 0l1 2c2 3 6 2 9-2 0-4-1-9-3-14-1-2-3-3-7-3l-1 2h-8zM8 11l4-2.500M24 11l-4-2.500" stroke="url(#gDis)" />
        <circle cx="12" cy="16.500" r="2.500" fill="#14a8f5" />
        <circle cx="20" cy="16.500" r="2.500" fill="#0d80fa" />
      </Task>
    </div>
  );
}

function Gauge({ value, arc, shift = "" }: { value: string; arc: string; shift?: string }) {
  return (
    <div className="relative flex h-[46px] w-10 shrink-0 items-center justify-center">
      <svg width="40" height="46" viewBox="0 0 40 46" fill="none" className="absolute inset-0">
        <circle cx="20" cy="23" r="18.500" stroke="#0b0e0f" strokeWidth="4" />
        <path d={arc} stroke="#f87d7d" strokeWidth="5" strokeLinecap="round" />
      </svg>
      <span className={`relative text-[12px] text-[#d0d3d5] ${NOTO} ${shift}`}>{value}</span>
    </div>
  );
}

const bars: [string, string][] = [
  ["h-1", "bg-[#f87d7d]"], ["h-[7px]", "bg-[#ffd97a]"], ["h-2", "bg-[#b5f57a]"], ["h-1.5", "bg-[#7af59c]"],
  ["h-2", "bg-[#7af3fb]"], ["h-[3px]", "bg-[#7a98f8]"], ["h-[5px]", "bg-[#b57af8]"], ["h-1.5", "bg-[#fb7ad8]"],
];

function Tray() {
  return (
    <div className="ml-auto flex items-center pr-[7px] text-[#d0d3d5]">
      <Gauge value="27.8%" arc="M3 20C2 32 9 41 18 41" shift="pl-1" />
      <div className="ml-6 flex h-[46px] w-[68px] items-end justify-between pb-[2px]">
        {bars.map(([h, c], i) => (
          <span key={i} className={`w-[5px] ${h} ${c}`} />
        ))}
      </div>
      <div className="ml-[23px]"><Gauge value="14.1%" arc="M6.500 35C9 39 12 40.500 16.500 41" /></div>
      <svg width="32" height="32" viewBox="0 0 32 32" fill="none" stroke="url(#gNote)" strokeWidth="2.500" strokeLinecap="round" strokeLinejoin="round" className="ml-6">
        <path d="M13 2H4C2.500 2 2 2.500 2 4v24c0 1.500.5 2 2 2h24c1.500 0 2-.5 2-2V20" />
        <path d="M13 21l2-9 9-9c2-2 7 1 6 5l-9 10zM17 11l6 6M21 6l6 6" />
      </svg>
      <svg width="20" height="20" viewBox="0 0 20 20" fill="none" stroke="currentColor" strokeWidth="1.300" className="ml-4">
        <path d="M3 14.500h14M4.500 14c2-2 1-5 2-8 1.500-3 5.500-3 7 0 1 3 0 6 2 8M10 2v2M3.500 3C2.500 4 2 6 2 7.500M16.500 3c1 1 1.500 3 1.500 4.500M1 4.500L.5 7M19 4.500l.5 2.500" />
        <circle cx="10" cy="17" r="1.500" fill="currentColor" />
      </svg>
      <span className={`ml-[41px] w-5 whitespace-nowrap text-[13px] font-medium tracking-[-0.2px] text-[#3f4a94] ${NOTO}`}>EN</span>
      <svg width="24" height="22" viewBox="0 0 24 22" fill="none" stroke="url(#gTerm)" strokeWidth="2" strokeLinecap="round" className="ml-[7px] mr-px">
        <path d="M22 8V4c0-2-1-2.500-2.500-2.500H5C3 1.500 2 2.500 2 4.500v12c0 2 1 3.500 3 3.500h14c2 0 3-1 3-3v-2.500h-9M6 7l4 3.500L6 14" />
      </svg>
      <svg width="20" height="20" viewBox="0 0 20 20" fill="none" stroke="currentColor" strokeWidth="1.500" className="ml-[7px]">
        <rect x="3.500" y="4" width="13" height="14" /><path d="M6 9h8M6 12h6M6 15h4" /><path d="M6 2h8v4H6z" fill="currentColor" />
      </svg>
      <svg width="20" height="20" viewBox="0 0 20 20" fill="none" stroke="currentColor" strokeWidth="1.300" className="ml-[8px] mr-px">
        <path d="M2 7.500h3v5H2zM6 7l5-5v16l-5-5zM14 6c2 2.500 2 5.500 0 8M16.500 8c.8 1.500.8 2.500 0 4" />
      </svg>
      <svg width="20" height="20" viewBox="0 0 20 20" fill="none" stroke="currentColor" strokeWidth="1.400" className="ml-[11px]">
        <path d="M5.500 5.500l9 8.500-4.500 4V2l4.500 4-9 8.500" />
      </svg>
      <svg width="22" height="20" viewBox="0 0 22 20" fill="none" stroke="#5c6062" strokeWidth="1.400" className="ml-[9px]">
        <path d="M1 8c6-6.500 14-6.500 20 0M4 11c4-4.500 10-4.500 14 0M7 14c2.500-3 5.500-3 8 0" />
        <circle cx="11" cy="16.500" r="1.500" />
        <text x="15" y="19.500" fontSize="10" fontWeight="700" fill="#f0a030" stroke="none" fontFamily="Noto Sans">?</text>
      </svg>
      <svg width="12" height="12" viewBox="0 0 12 12" fill="currentColor" className="ml-[11px]"><path d="M0 9.500L6 3.500l6 6z" /></svg>
      <div className={`ml-3 flex w-[91px] flex-col items-center whitespace-nowrap ${NOTO}`}>
        <span className="-mt-1 text-[24px] leading-[24px] tracking-[-0.4px]">7:16 PM</span>
        <span className="text-[17.5px] leading-[15px] tracking-[-0.5px]">10/19/21</span>
      </div>
    </div>
  );
}

export default function App() {
  return (
    <div className="flex h-[1080px] w-[1920px] flex-col overflow-hidden bg-[#1e1e20] font-[Roboto,sans-serif]">
      <Gradients />
      <TitleBar />
      <TabStrip />
      <NavBar />
      <Bookmarks />
      <div className="flex min-h-0 flex-1">
        <SideNav />
        <main className="flex min-w-0 flex-1 flex-col">
          <AppBar />
          <div className="flex items-start gap-4 pl-[50px] pt-4">
            <Card icon="grid" title="Bed Mesh" className="h-[615px] w-[1163px] shrink-0 shadow-[0_2px_4px_rgba(0,0,0,0.4)]">
              <MeshPlot />
            </Card>
            <div className="flex w-[574px] shrink-0 flex-col gap-4">
              <Controls />
              <Card
                icon="expand"
                title="Endstops"
                className="shadow-[0_2px_4px_rgba(0,0,0,0.4)]"
                action={<Mdi name="refresh" size={18} className="text-[#e1e1e1]" />}
              >
                <div className="flex h-[39px] items-center border-b border-[#474749] px-4 text-[14px] tracking-[0.08px] text-[#dcdcdd]">
                  Use the refresh button to update endstop status.
                </div>
              </Card>
            </div>
          </div>
          <footer className="mt-auto flex h-[35px] items-center justify-end pr-4 text-[16px] font-light text-[#87878a]">
            © 2021 fluidd: v1.16.2-0fa3c9b
          </footer>
        </main>
        <div className="w-3 shrink-0 bg-[#cdcdcd]" />
      </div>
      <div className="flex h-[46px] shrink-0 items-center bg-[#101416]">
        <svg width="40" height="46" viewBox="0 0 40 46" fill="none" className="-mr-10 shrink-0">
          <circle cx="16.500" cy="12" r="1.600" fill="#e08a6a" />
          <circle cx="12" cy="22" r="2.500" fill="#66b80e" />
          <circle cx="20" cy="33" r="3.300" fill="#1b87f0" />
          <path d="M26 10l7 8-7 8" stroke="#3e4143" strokeWidth="4" />
        </svg>
        <Tasks />
        <Tray />
      </div>
    </div>
  );
}
